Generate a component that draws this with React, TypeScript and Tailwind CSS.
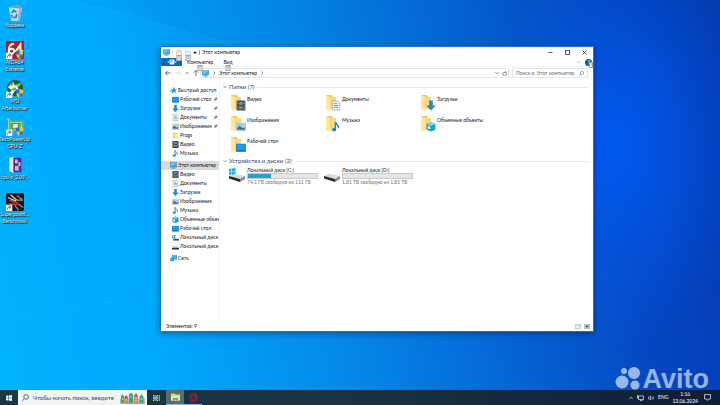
import type { ReactNode } from "react";

type IconName =
  | "star"
  | "desktop"
  | "download"
  | "document"
  | "picture"
  | "folder"
  | "video"
  | "music"
  | "pc"
  | "cube"
  | "driveC"
  | "driveD"
  | "network";

// Small glyphs, all drawn on a 16x16 grid.
const GLYPHS: Record<IconName, ReactNode> = {
  star: (
    <path
      d="M9 1l1.6 4.4 4.4.3-3.5 3 1.3 4.8L9 11 4.6 14l1-4.6L2 6.6l5-.8zM0 8h4M1 11h3"
      fill="#2196e3"
      stroke="#2196e3"
    />
  ),
  desktop: (
    <>
      <rect x="0" y="2" width="16" height="13" fill="#1389dc" />
      <path d="M1 3h14v9H1z" fill="#209bec" />
      <path d="M1 13h14" stroke="#0b62a8" />
    </>
  ),
  download: <path d="M5 0h6v8h4.500L8 16 .5 8H5z" fill="#2488d0" />,
  document: (
    <>
      <path d="M2 1h9l3 3v11H2z" fill="#f7fafc" stroke="#7f929e" />
      <path d="M4.500 5h6M4.500 8h7M4.500 11h7" stroke="#3b8db3" strokeWidth="1.300" />
    </>
  ),
  picture: (
    <>
      <rect x=".5" y="2.500" width="15" height="12" fill="#e8f5fc" stroke="#94a7b2" />
      <path d="M2 4h12v4H2z" fill="#8bcdf0" />
      <path d="M2 13V9l4-2 4 3 4-1v4z" fill="#286d9b" />
    </>
  ),
  folder: (
    <>
      <path d="M2 1h8l1 2h3v12H2z" fill="#f2cd67" />
      <path d="M5 3h9v12H5z" fill="#ffe69a" />
    </>
  ),
  video: (
    <>
      <rect x="1" y="0" width="14" height="16" fill="#3a3f43" />
      <path d="M3 1v14M13 1v14" stroke="#c4cacd" strokeWidth="1.500" strokeDasharray="1.500 1.500" />
      <path d="M5 2h6v5H5z" fill="#6d8cc0" />
      <path d="M5 9h6v5H5z" fill="#858a68" />
    </>
  ),
  music: (
    <>
      <path d="M7 13V1c1 4 6 4 5 10" fill="none" stroke="#1688c4" strokeWidth="2.200" />
      <ellipse cx="5" cy="13" rx="3.500" ry="2.500" fill="#1688c4" />
    </>
  ),
  pc: (
    <>
      <rect x=".5" y="1.500" width="15" height="10" fill="#35b1ee" stroke="#55788c" />
      <path d="M2 3h12L2 9z" fill="#75d1fa" />
      <path d="M3 14h10M8 12v2" stroke="#3a92c5" strokeWidth="2" />
    </>
  ),
  cube: (
    <>
      <path d="M1 4l7-3 7 3v9l-7 3-7-3z" fill="#12a4c6" />
      <path d="M1 4l7-3 7 3-7 3z" fill="#77d9eb" />
      <path d="M3 7l4 1.500v4L3 11z" fill="#e6faff" />
    </>
  ),
  driveC: (
    <>
      <path d="M0 3h3v3H0zM4 2.500h4V6H4zM0 7h3v3H0zM4 7h4v3H4z" fill="#19a9e6" />
      <path d="M3 11h13v4H3z" fill="#45494d" />
    </>
  ),
  driveD: (
    <>
      <path d="M2 8h12l2 3H0z" fill="#b8bcc0" />
      <path d="M0 11h16v4H0z" fill="#35383b" />
    </>
  ),
  network: (
    <>
      <rect x="5.500" y="1.500" width="10" height="8" fill="#48b5ec" stroke="#1474b7" />
      <circle cx="5" cy="10" r="4.500" fill="#1681cd" />
      <path d="M1 10h8M5 6c-2 3-2 5 0 8M9 12h5" stroke="#91d6fa" fill="none" />
    </>
  ),
};

function Glyph({ name, className }: { name: IconName; className: string }) {
  return (
    <svg viewBox="0 0 16 16" className={`shrink-0 ${className}`} aria-hidden="true">
      {GLYPHS[name]}
    </svg>
  );
}

type NavItem = { icon: IconName; label: string; pinned?: boolean };
type NavGroup = { root: NavItem; active?: boolean; items: NavItem[] };

const NAV: NavGroup[] = [
  {
    root: { icon: "star", label: "Быстрый доступ" },
    items: [
      { icon: "desktop", label: "Рабочий стол", pinned: true },
      { icon: "download", label: "Загрузки", pinned: true },
      { icon: "document", label: "Документы", pinned: true },
      { icon: "picture", label: "Изображения", pinned: true },
      { icon: "folder", label: "Progs" },
      { icon: "video", label: "Видео" },
      { icon: "music", label: "Музыка" },
    ],
  },
  {
    root: { icon: "pc", label: "Этот компьютер" },
    active: true,
    items: [
      { icon: "video", label: "Видео" },
      { icon: "document", label: "Документы" },
      { icon: "download", label: "Загрузки" },
      { icon: "picture", label: "Изображения" },
      { icon: "music", label: "Музыка" },
      { icon: "cube", label: "Объемные объекты" },
      { icon: "desktop", label: "Рабочий стол" },
      { icon: "driveC", label: "Локальный диск (C:)" },
      { icon: "driveD", label: "Локальный диск (D:)" },
    ],
  },
  { root: { icon: "network", label: "Сеть" }, items: [] },
];

const FOLDERS: NavItem[] = [
  { icon: "video", label: "Видео" },
  { icon: "document", label: "Документы" },
  { icon: "download", label: "Загрузки" },
  { icon: "picture", label: "Изображения" },
  { icon: "music", label: "Музыка" },
  { icon: "cube", label: "Объемные объекты" },
  { icon: "desktop", label: "Рабочий стол" },
];

const DRIVES = [
  { label: "Локальный диск (C:)", note: "74,1 ГБ свободно из 111 ГБ", used: 33, system: true },
  { label: "Локальный диск (D:)", note: "1,81 ТБ свободно из 1,81 ТБ", used: 0, system: false },
];

function FolderIcon({ name }: { name: IconName }) {
  return (
    <div className="relative h-4 w-4 shrink-0">
      <svg viewBox="0 0 16 16" className="h-4 w-4" aria-hidden="true">
        <path d="M1 0h6l1 2h3v12H1z" fill="#efc765" />
        <path d="M1 0l4 2v14l-4-2z" fill="#ffe699" />
        <path d="M5 2h6v12H5z" fill="#f8d77f" />
      </svg>
      <Glyph name={name} className="absolute right-0 bottom-0 h-[11px] w-[10px]" />
    </div>
  );
}

function DriveIcon({ system }: { system: boolean }) {
  return (
    <svg viewBox="0 0 18 16" className="h-4 w-[18px] shrink-0" aria-hidden="true">
      {system && <path d="M1 2l2.500-.4V4.500H1zM4 1.500L7.500 1v3.500H4zM1 5h2.500v3L1 7.600zM4 5h3.500v3.600L4 8.100z" fill="#18aee8" />}
      <path d="M1 9l5-2 11 2-5 3z" fill="#d5d7d9" />
      <path d="M1 9l11 3v3L1 11.500z" fill="#292c2f" />
      <path d="M12 12l5-3v3l-5 3z" fill="#85898d" />
    </svg>
  );
}

function Chevron({ dir, className = "text-gray-600" }: { dir: "down" | "right" | "up"; className?: string }) {
  const d = { down: "M1 2.500l3 3 3-3", right: "M3 1l3 3-3 3", up: "M1 5.500l3-3 3 3" }[dir];
  return (
    <svg viewBox="0 0 8 8" className={`size-1 shrink-0 ${className}`} aria-hidden="true">
      <path d={d} fill="none" stroke="currentColor" strokeWidth="1.500" />
    </svg>
  );
}

function KeyTip({ children }: { children: ReactNode }) {
  return (
    <span className="absolute top-full left-1/2 z-10 -mt-px flex h-[6px] w-[5px] -translate-x-1/2 items-center justify-center border border-gray-400 bg-white text-[4px] leading-none text-gray-600">
      {children}
    </span>
  );
}

function TitleBar() {
  return (
    <header className="flex h-[11px] shrink-0 items-center pl-[2px]">
      <Glyph name="pc" className="size-[7px]" />
      <span className="ml-[2px] h-[6px] w-px bg-gray-200" />
      <button type="button" aria-label="Свойства" className="relative ml-[3px]">
        <svg viewBox="0 0 12 12" className="size-[6px]" aria-hidden="true">
          <path d="M1 4h10v8H1zM3 4V1h6v3" fill="#fff" stroke="#c69565" />
        </svg>
        <KeyTip>1</KeyTip>
      </button>
      <button type="button" aria-label="Новая папка" className="relative ml-[3px]">
        <svg viewBox="0 0 12 12" className="size-[6px]" aria-hidden="true">
          <path d="M1 2h5l1 2h4v7H1z" fill="#eef3f7" stroke="#a6b4bf" />
        </svg>
        <KeyTip>2</KeyTip>
      </button>
      <svg viewBox="0 0 6 6" className="ml-[2px] size-1" aria-hidden="true">
        <path d="M0 1h6L3 5z" fill="#333" />
      </svg>
      <span className="mx-[2px] h-[5px] w-px bg-gray-400" />
      <h1>Этот компьютер</h1>
      <div className="ml-auto flex h-full">
        {[
          ["Свернуть", "M1 5h8"],
          ["Развернуть", "M1 1h8v8H1z"],
          ["Закрыть", "M1 1l8 8M9 1l-8 8"],
        ].map(([label, d]) => (
          <button key={label} type="button" aria-label={label} className="flex w-[17px] items-center justify-center">
            <svg viewBox="0 0 10 10" className="size-[5px]" aria-hidden="true">
              <path d={d} fill="none" stroke="#222" strokeWidth="1.600" />
            </svg>
          </button>
        ))}
      </div>
    </header>
  );
}

function Ribbon() {
  return (
    <div className="flex h-[9px] shrink-0 items-center border-b border-gray-100">
      <button type="button" aria-label="Файл" className="flex h-full w-[21px] items-center justify-center bg-[#0868bd]">
        <svg viewBox="0 0 20 12" className="h-[6px] w-[10px]" aria-hidden="true">
          <path d="M1 6h3M16 6h3" stroke="#9bc5eb" strokeWidth="3" />
          <rect x="5" y="1" width="10" height="10" rx="2" fill="#fff" />
          <path d="M8 3.500h4M8 6h3M8 3v6" stroke="#0868bd" />
        </svg>
      </button>
      <button type="button" className="relative ml-[5px]">
        Компьютер
        <KeyTip>C</KeyTip>
      </button>
      <button type="button" className="relative ml-[10px]">
        Вид
        <KeyTip>V</KeyTip>
      </button>
      <div className="ml-auto flex items-center gap-1 pr-px">
        <Chevron dir="down" className="text-gray-400" />
        <button type="button" aria-label="Справка" className="relative flex size-[7px] items-center justify-center rounded-full bg-[#0b5f9e] text-white">
          ?
          <span className="absolute top-[3px] left-[4px] flex h-[6px] w-[4px] items-center justify-center border border-gray-400 bg-white text-[4px] leading-none text-gray-600">
            I
          </span>
        </button>
      </div>
    </div>
  );
}

function AddressBar() {
  return (
    <div className="flex h-[12px] shrink-0 items-center pr-[5px] pl-1">
      <div className="flex w-[35px] shrink-0 items-center gap-1">
        {[
          ["Назад", "M11 6H1m4-4L1 6l4 4", "text-gray-700"],
          ["Вперед", "M1 6h10m-4-4l4 4-4 4", "text-gray-300"],
        ].map(([label, d, color]) => (
          <button key={label} type="button" aria-label={label} className={color}>
            <svg viewBox="0 0 12 12" className="size-[6px]" aria-hidden="true">
              <path d={d} fill="none" stroke="currentColor" strokeWidth="1.500" />
            </svg>
          </button>
        ))}
        <Chevron dir="down" />
        <button type="button" aria-label="Вверх" className="text-gray-700">
          <svg viewBox="0 0 12 12" className="size-[6px]" aria-hidden="true">
            <path d="M6 12V1M2 5l4-4 4 4" fill="none" stroke="currentColor" strokeWidth="1.500" />
          </svg>
        </button>
      </div>
      <div className="flex h-[10px] flex-1 items-center gap-[3px] border border-gray-200 px-px">
        <Glyph name="pc" className="size-[7px]" />
        <Chevron dir="right" />
        <span>Этот компьютер</span>
        <Chevron dir="right" />
        <span className="flex-1" />
        <Chevron dir="down" />
        <button type="button" aria-label="Обновить">
          <svg viewBox="0 0 12 12" className="size-[5px]" aria-hidden="true">
            <path d="M9 3a4.500 4.500 0 1 1-5 0M9 0v4H5" fill="none" stroke="#444" strokeWidth="1.500" />
          </svg>
        </button>
      </div>
      <label className="ml-[3px] flex h-[10px] w-[76px] items-center border border-gray-200 px-[3px]">
        <input
          aria-label="Поиск"
          placeholder="Поиск в: Этот компьютер"
          className="min-w-0 flex-1 outline-none placeholder:text-gray-500"
        />
        <Magnifier className="size-[5px] text-gray-600" />
      </label>
    </div>
  );
}

function Magnifier({ className }: { className: string }) {
  return (
    <svg viewBox="0 0 12 12" className={`shrink-0 ${className}`} aria-hidden="true">
      <circle cx="7" cy="5" r="4" fill="none" stroke="currentColor" strokeWidth="1.300" />
      <path d="M4 8l-3.500 3.500" stroke="currentColor" strokeWidth="1.300" />
    </svg>
  );
}

function Sidebar() {
  return (
    <nav className="flex w-[59px] shrink-0 flex-col gap-[3px] overflow-hidden border-r border-gray-100 pt-[7px]">
      {NAV.map((group) => (
        <ul key={group.root.label}>
          <li className={`flex h-[9px] items-center gap-px pl-[9px] ${group.active ? "bg-[#d9d9d9]" : ""}`}>
            <Glyph name={group.root.icon} className="size-[7px]" />
            <span className="whitespace-nowrap">{group.root.label}</span>
          </li>
          {group.items.map((item) => (
            <li key={item.label} className="flex h-[9px] items-center gap-px pl-[11px]">
              <Glyph name={item.icon} className="size-[7px]" />
              <span className="whitespace-nowrap">{item.label}</span>
              {item.pinned && (
                <svg viewBox="0 0 10 10" className="mr-px ml-auto size-[5px] shrink-0" aria-hidden="true">
                  <path d="M6 1l3 3-2 .5L5.500 7 3 4.500 5.500 3zM4 6L1 9" fill="#6b7280" stroke="#6b7280" />
                </svg>
              )}
            </li>
          ))}
        </ul>
      ))}
    </nav>
  );
}

function GroupHeading({ children }: { children: ReactNode }) {
  return (
    <h2 className="flex h-2 items-center gap-[2px] text-[6px] leading-none text-[#24457c]">
      <Chevron dir="down" className="text-gray-500" />
      {children}
      <span className="ml-px h-px flex-1 bg-[#e4e8ee]" />
    </h2>
  );
}

function Content() {
  return (
    <main className="min-w-0 flex-1 pt-1 pr-1 pl-[3px]">
      <section>
        <GroupHeading>Папки (7)</GroupHeading>
        <ul className="grid grid-cols-[repeat(auto-fill,95px)] pt-1 pl-[7px]">
          {FOLDERS.map((f) => (
            <li key={f.label} className="flex h-[21px] gap-px">
              <FolderIcon name={f.icon} />
              <span className="pt-px whitespace-nowrap">{f.label}</span>
            </li>
          ))}
        </ul>
      </section>
      <section className="-mt-px">
        <GroupHeading>Устройства и диски (2)</GroupHeading>
        <ul className="grid grid-cols-[repeat(auto-fill,95px)] pt-[2px] pl-[5px]">
          {DRIVES.map((d) => (
            <li key={d.label} className="flex gap-px">
              <DriveIcon system={d.system} />
              <div className="w-[71px]">
                <p className="leading-[6px] whitespace-nowrap">{d.label}</p>
                <div className="h-[6px] border border-[#c8c8c8] bg-[#e6e6e6]">
                  <div className="h-full bg-[#26a0da]" style={{ width: `${d.used}%` }} />
                </div>
                <p className="leading-[6px] whitespace-nowrap text-gray-500">{d.note}</p>
              </div>
            </li>
          ))}
        </ul>
      </section>
    </main>
  );
}

function ExplorerWindow() {
  return (
    <div className="absolute top-[46px] left-[160px] flex h-[286px] w-[434px] flex-col border border-[#1976b8] bg-white text-[5px] leading-[7px] text-gray-900 shadow-[0_2px_6px_rgba(0,0,0,0.35)]">
      <TitleBar />
      <Ribbon />
      <AddressBar />
      <div className="flex min-h-0 flex-1">
        <Sidebar />
        <Content />
      </div>
      <footer className="flex h-[10px] shrink-0 items-center gap-[3px] pr-[3px] pl-[5px]">
        <span className="flex-1">Элементов: 9</span>
        <button type="button" aria-label="Таблица">
          <svg viewBox="0 0 12 10" className="h-[5px] w-[6px]" aria-hidden="true">
            <path d="M.5.5h11v9H.5zM3 3h2M7 3h3M3 6h2M7 6h3" fill="none" stroke="#7b8790" />
          </svg>
        </button>
        <button type="button" aria-label="Крупные значки">
          <svg viewBox="0 0 12 10" className="h-[5px] w-[6px]" aria-hidden="true">
            <path d="M.5.5h11v9H.5z" fill="#d9effa" stroke="#5c7482" />
            <path d="M3 3h6v4H3z" fill="#34657f" />
          </svg>
        </button>
      </footer>
    </div>
  );
}

function ShortcutArrow() {
  return (
    <>
      <rect x="0" y="13" width="7" height="7" fill="#f4f7fa" />
      <path d="M1.500 18.500c0-2 1-3 3-3M3 14l2.500 1.500L4 17.500" fill="none" stroke="#1c65ae" />
    </>
  );
}

function Shield() {
  return (
    <>
      <path d="M11 11l4-1 4 1c0 5-1 7-4 9-3-2-4-4-4-9z" fill="#f3c52f" />
      <path d="M15 10l-4 1v4h4zM15 15h4c-.5 2-2 4-4 5z" fill="#2472c8" />
    </>
  );
}

const SHORTCUTS: { lines: string[]; height: string; art: ReactNode }[] = [
  {
    lines: ["Корзина"],
    height: "h-[37px]",
    art: (
      <>
        <path d="M3 4l11-3 4 3-3 15H6z" fill="#c5dcea" />
        <path d="M3 4l12 1 3-1-4-3z" fill="#8299a8" />
        <path d="M15 5l3-1-3 15-2-1z" fill="#95b1c3" />
        <path d="M6.500 10l2-3 3 2M12 11l-1 4H8M6 12l1 3" fill="none" stroke="#167bce" strokeWidth="1.800" />
      </>
    ),
  },
  {
    lines: ["AIDA64", "Extreme"],
    height: "h-[39px]",
    art: (
      <>
        <rect width="20" height="20" fill="#b91920" />
        <path d="M9 3C4 3 3 7 3 11s5 4 6 1-3-5-6-1M16 16V4l-5 7h8" fill="none" stroke="#fff" strokeWidth="2.200" />
        <Shield />
        <ShortcutArrow />
      </>
    ),
  },
  {
    lines: ["MSI", "Afterburner"],
    height: "h-[38px]",
    art: (
      <>
        <circle cx="10" cy="9" r="9" fill="#295836" />
        <path d="M2 8l6-6 2 4 7-3-4 6 5 4-8-1-4 6v-7z" fill="#e4eef0" />
        <path d="M4 5l5-3-2 5zM11 5l5-2-3 5zM5 11l5-3 3 4z" fill="#52c647" />
        <Shield />
        <ShortcutArrow />
      </>
    ),
  },
  {
    lines: ["TechPowerUp", "GPU-Z"],
    height: "h-[38px]",
    art: (
      <>
        <path d="M1 1h2v14" fill="none" stroke="#c9d2c7" strokeWidth="1.500" />
        <rect x="3" y="3" width="17" height="12" fill="#65b557" />
        <path d="M5 5h13M5 13h10M17 7v5" stroke="#b9dd8c" />
        <rect x="7" y="6" width="7" height="6" fill="#dce7d0" stroke="#3f8543" />
        <Shield />
        <ShortcutArrow />
      </>
    ),
  },
  {
    lines: ["cpu-z_2.09..."],
    height: "h-[37px]",
    art: (
      <>
        <path d="M4 2l5-1v18l-5-2z" fill="#f7f2dc" />
        <path d="M8 2h9v16H8z" fill="#55258e" />
        <path d="M4 4l4-2v16l-4-2z" fill="#e8e7f1" />
        <path d="M10 4h3v4h-3zM14 7h2v4h-2zM10 11h4v5h-4z" fill="#d5c6ee" />
        <path d="M11 5l4 4-4 4 4 4" fill="none" stroke="#8ea0e8" />
      </>
    ),
  },
  {
    lines: ["Superpositi...", "Benchmark"],
    height: "h-[38px]",
    art: (
      <>
        <rect width="20" height="20" rx="2" fill="#1a1519" />
        <path d="M2 5l9 4M5 2l7 6" stroke="#dbc9bb" strokeWidth="1.500" />
        <path d="M4 8l9 3M3 12l9 1" stroke="#d74232" strokeWidth="1.800" />
        <path d="M12 3l6 4M12 8h7M13 12l6 4M10 14l4 5" stroke="#9a9290" strokeWidth="1.300" />
        <ShortcutArrow />
      </>
    ),
  },
];

function DesktopIcons() {
  return (
    <ul className="w-[29px] pt-1 text-[5px] leading-[7px] text-white">
      {SHORTCUTS.map((s) => (
        <li key={s.lines[0]} className={`flex flex-col items-center ${s.height}`}>
          <svg viewBox="0 0 20 20" className="h-[18px] w-[18px] shrink-0" aria-hidden="true">
            {s.art}
          </svg>
          <span className="text-center whitespace-nowrap [text-shadow:0_0_1px_#000,1px_1px_1px_#000]">
            {s.lines.map((line) => (
              <span key={line} className="block">
                {line}
              </span>
            ))}
          </span>
        </li>
      ))}
    </ul>
  );
}

function Wallpaper() {
  return (
    <svg
      viewBox="0 0 720 405"
      preserveAspectRatio="none"
      className="pointer-events-none absolute inset-0 size-full"
      aria-hidden="true"
    >
      <path d="M75 0L260 52L720 52V0z" fill="#0050b0" opacity=".06" />
      <path d="M75 0l185 52" stroke="#4cc0ff" opacity=".2" />
      <path d="M0 318l160-22" stroke="#4cd0ff" opacity=".12" />
    </svg>
  );
}

function Watermark() {
  return (
    <div className="pointer-events-none absolute right-[11px] bottom-[13px] z-20 flex items-center gap-[2px] text-[27px] leading-6 font-bold text-white/60">
      <svg viewBox="0 0 26 26" className="size-[26px]" fill="currentColor" aria-hidden="true">
        <circle cx="9" cy="5" r="3" />
        <circle cx="19" cy="7" r="6" />
        <circle cx="7" cy="16" r="6.500" />
        <circle cx="20" cy="19" r="4.500" />
      </svg>
      <span className="font-['Liberation_Sans',sans-serif]">Avito</span>
    </div>
  );
}

function Taskbar() {
  return (
    <footer className="relative z-10 flex h-[15px] shrink-0 items-center bg-linear-to-r from-[#1b3743] via-[#19323f] to-[#0d1e38] text-[5px] leading-[7px] text-white">
      <button type="button" aria-label="Пуск" className="flex h-full w-[18px] items-center justify-center">
        <svg viewBox="0 0 12 12" className="size-[6px]" fill="#fff" aria-hidden="true">
          <path d="M0 1.700l5-.7v4.500H0zM6 .8L12 0v5.500H6zM0 6.500h5V11l-5-.7zM6 6.500h6V12l-6-.8z" />
        </svg>
      </button>
      <label className="flex h-full w-[129px] items-center gap-1 bg-[#f2f3f4] pr-[2px] pl-1">
        <Magnifier className="size-[7px] text-gray-700" />
        <input
          aria-label="Поиск Windows"
          placeholder="Чтобы начать поиск, введите"
          className="min-w-0 flex-1 text-[6px] outline-none placeholder:text-gray-700"
        />
        <svg viewBox="0 0 50 24" className="h-[12px] w-[25px] shrink-0" aria-hidden="true">
          <path d="M0 13h50v11H0z" fill="#9fcdb9" />
          <path d="M2 24V9l3-5 3 5v15zM18 24V6l4-5 4 5v18zM39 24V10l4-6 4 6v14z" fill="#3a9d9a" />
          <path d="M9 24V12h7v12zM28 24V9h8v15z" fill="#df764c" />
          <path d="M8 12l4-6 5 6zM27 9l5-7 5 7z" fill="#c24e43" />
          <path d="M11 16h3M20 10h3M30 13h4M30 18h4M41 14h4M4 14h3" stroke="#fff1b5" strokeWidth="2" />
          <path d="M0 22c12-5 25 4 50-2v4H0z" fill="#d9a43d" />
        </svg>
      </label>
      <button type="button" aria-label="Представление задач" className="flex h-full w-[19px] items-center justify-center">
        <svg viewBox="0 0 14 12" className="h-[6px] w-[7px]" aria-hidden="true">
          <path d="M1 0v2h8V0M1 12v-2h8v2M1 4.500h8v3H1zM12.500 0v12" fill="none" stroke="#fff" strokeWidth="1.400" />
        </svg>
      </button>
      <button type="button" aria-label="Проводник" className="flex h-full w-[18px] items-center justify-center border-b border-[#76b9ed] bg-[#566c76]">
        <svg viewBox="0 0 18 16" className="h-[8px] w-[9px]" aria-hidden="true">
          <path d="M0 1h7l2 2h9v12H0z" fill="#f4cf61" />
          <path d="M0 6h18v9H0z" fill="#ffe98a" />
          <path d="M4 15v-5h10v5h-3v-2H7v2z" fill="#3d9dd2" />
        </svg>
      </button>
      <button type="button" aria-label="Opera" className="flex h-full w-[18px] items-center justify-center border-b border-[#76b9ed]">
        <svg viewBox="0 0 18 18" className="size-[9px]" aria-hidden="true">
          <circle cx="9" cy="9" r="7.500" fill="none" stroke="#c2183c" strokeWidth="2" />
          <ellipse cx="9" cy="9" rx="3.500" ry="6.500" fill="none" stroke="#b3173a" strokeWidth="1.500" />
        </svg>
      </button>
      <div className="ml-auto flex items-center gap-1 pr-[9px]">
        <button type="button" aria-label="Скрытые значки" className="flex">
          <Chevron dir="up" className="text-white" />
        </button>
        <svg viewBox="0 0 14 12" className="h-[6px] w-[7px]" aria-hidden="true">
          <path d="M3 2h10v7H3zM6 11h5M1 0v6h3" fill="none" stroke="#fff" strokeWidth="1.300" />
        </svg>
        <svg viewBox="0 0 14 12" className="h-[6px] w-[6px]" aria-hidden="true">
          <path d="M1 4h2l3-3v10L3 8H1zM9 4c1 1 1 3 0 4M11 2c3 2 3 6 0 8" fill="none" stroke="#fff" strokeWidth="1.300" />
        </svg>
        <span>ENG</span>
        <time className="block text-center">
          1:16
          <br />
          13.06.2024
        </time>
        <button type="button" aria-label="Уведомления" className="ml-[2px]">
          <svg viewBox="0 0 14 14" className="size-[7px]" aria-hidden="true">
            <path d="M1 1h12v9H9l-2 3-2-3H1z" fill="none" stroke="#fff" strokeWidth="1.300" />
          </svg>
        </button>
      </div>
    </footer>
  );
}

export default function App() {
  return (
    <div className="relative flex h-screen flex-col overflow-hidden bg-[radial-gradient(ellipse_130px_200px_at_86%_36%,rgba(0,96,255,0.75),transparent),linear-gradient(80deg,#00b4ff_0%,#00a8fb_22%,#0488e8_45%,#0566d6_65%,#0546c2_84%,#0439b0_100%)] font-['Lato','Roboto',sans-serif]">
      <Wallpaper />
      <div className="relative min-h-0 flex-1">
        <DesktopIcons />
        <ExplorerWindow />
      </div>
      <Taskbar />
      <Watermark />
    </div>
  );
}
